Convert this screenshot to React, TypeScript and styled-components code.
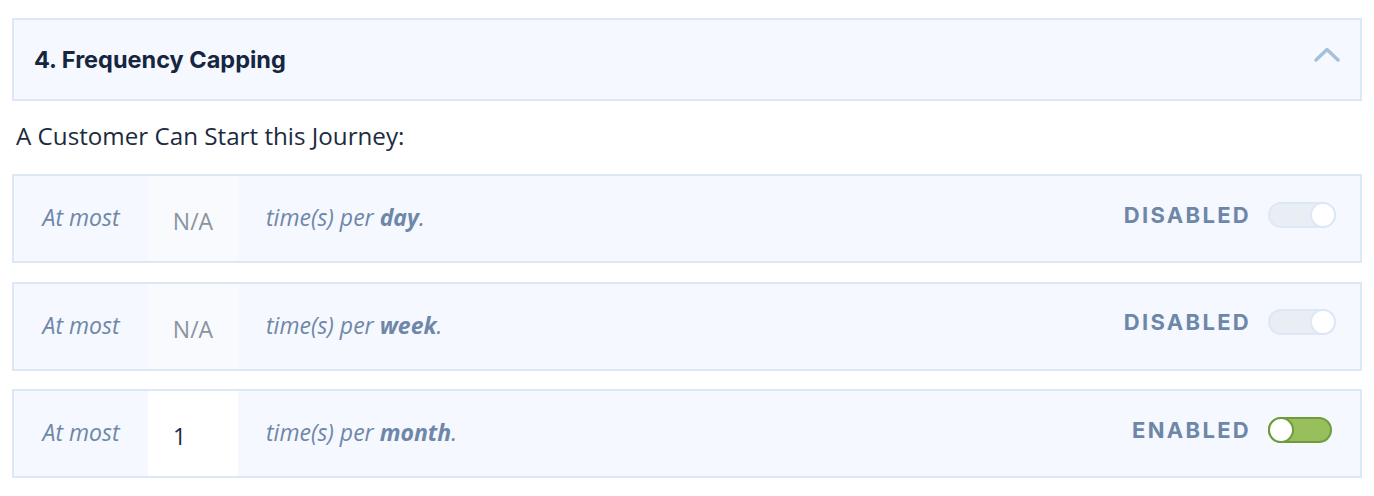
import React from "react";
import styled, { createGlobalStyle } from "styled-components";

const Global = createGlobalStyle`
  html, body { margin: 0; padding: 0; background: #ffffff; }
  body { font-family: "Open Sans", "Liberation Sans", sans-serif; }
`;

const Page = styled.div`
  padding: 18px 12px 0 12px;
  display: flex;
  flex-direction: column;
`;

const Header = styled.div`
  height: 79px;
  border: 2px solid #dde8f7;
  background: #f5f8fe;
  display: flex;
  align-items: center;
  justify-content: space-between;
  padding: 0 20px 0 20px;
`;

const Title = styled.h2`
  margin: 0;
  font-family: Inter, "Liberation Sans", sans-serif;
  font-weight: 700;
  font-size: 23.5px;
  color: #172640;
`;

const ChevronBox = styled.div`
  display: flex;
  margin-bottom: 12px;
`;

const Lead = styled.p`
  margin: 19px 0 22px 4px;
  font-size: 24.2px;
  line-height: 32px;
  color: #1d2b40;
`;

const Rows = styled.div`
  display: flex;
  flex-direction: column;
  gap: 18.5px;
`;

const Row = styled.div`
  height: 85px;
  border: 2px solid #dde8f7;
  background: #f5f8fe;
  display: flex;
  align-items: stretch;
`;

const Prefix = styled.div`
  width: 134px;
  display: flex;
  align-items: center;
  justify-content: center;
  font-style: italic;
  font-size: 23px;
  color: #6e87a8;
  padding-bottom: 3px;
`;

const Amount = styled.div<{ $active: boolean }>`
  width: 90px;
  display: flex;
  align-items: center;
  justify-content: ${(p) => (p.$active ? "flex-start" : "center")};
  padding-left: ${(p) => (p.$active ? "25px" : "0")};
  box-sizing: border-box;
  background: ${(p) => (p.$active ? "#ffffff" : "#f8fafd")};
  font-size: 23px;
  padding-top: 5px;
  color: ${(p) => (p.$active ? "#1b2740" : "#8a939f")};
`;

const Suffix = styled.div`
  flex: 1;
  display: flex;
  align-items: center;
  padding-left: 28px;
  padding-bottom: 3px;
  font-style: italic;
  font-size: 23px;
  color: #6e87a8;
  b { font-weight: 700; }
`;

const Status = styled.div`
  display: flex;
  align-items: center;
  gap: 17px;
  padding-right: 24px;
  padding-bottom: 8px;
`;

const StatusLabel = styled.span`
  font-family: Inter, "Liberation Sans", sans-serif;
  font-weight: 700;
  font-size: 22px;
  letter-spacing: 2.3px;
  color: #6d87a8;
`;

const Track = styled.div<{ $on: boolean }>`
  position: relative;
  box-sizing: border-box;
  width: ${(p) => (p.$on ? "64px" : "68px")};
  height: 26px;
  border-radius: 13px;
  border: 2px solid ${(p) => (p.$on ? "#6f9b3c" : "#dde8f7")};
  background: ${(p) => (p.$on ? "#97c05d" : "#e9eef5")};
  margin-right: ${(p) => (p.$on ? "4px" : "0")};
`;

const Knob = styled.div<{ $on: boolean }>`
  position: absolute;
  top: -2px;
  ${(p) => (p.$on ? "left: -2px;" : "right: -2px;")}
  box-sizing: border-box;
  width: 26px;
  height: 26px;
  border-radius: 50%;
  background: #ffffff;
  border: 2px solid ${(p) => (p.$on ? "#6f9b3c" : "#dde8f7")};
`;

const Chevron = () => (
  <svg width="26" height="16" viewBox="0 0 26 16" fill="none">
    <path d="M2 14 L13 3.5 L24 14" stroke="#a6bfda" strokeWidth="3.4" strokeLinecap="round" strokeLinejoin="round" />
  </svg>
);

const rows = [
  { unit: "day", value: "N/A", on: false },
  { unit: "week", value: "N/A", on: false },
  { unit: "month", value: "1", on: true },
];

export default function App() {
  return (
    <>
      <Global />
      <Page>
        <Header>
          <Title>4. Frequency Capping</Title>
          <ChevronBox>
            <Chevron />
          </ChevronBox>
        </Header>
        <Lead>A Customer Can Start this Journey:</Lead>
        <Rows>
          {rows.map((r) => (
            <Row key={r.unit}>
              <Prefix>At most</Prefix>
              <Amount $active={r.on}>{r.value}</Amount>
              <Suffix>
                time(s) per&nbsp;<b>{r.unit}</b>.
              </Suffix>
              <Status>
                <StatusLabel>{r.on ? "ENABLED" : "DISABLED"}</StatusLabel>
                <Track $on={r.on}>
                  <Knob $on={r.on} />
                </Track>
              </Status>
            </Row>
          ))}
        </Rows>
      </Page>
    </>
  );
}
